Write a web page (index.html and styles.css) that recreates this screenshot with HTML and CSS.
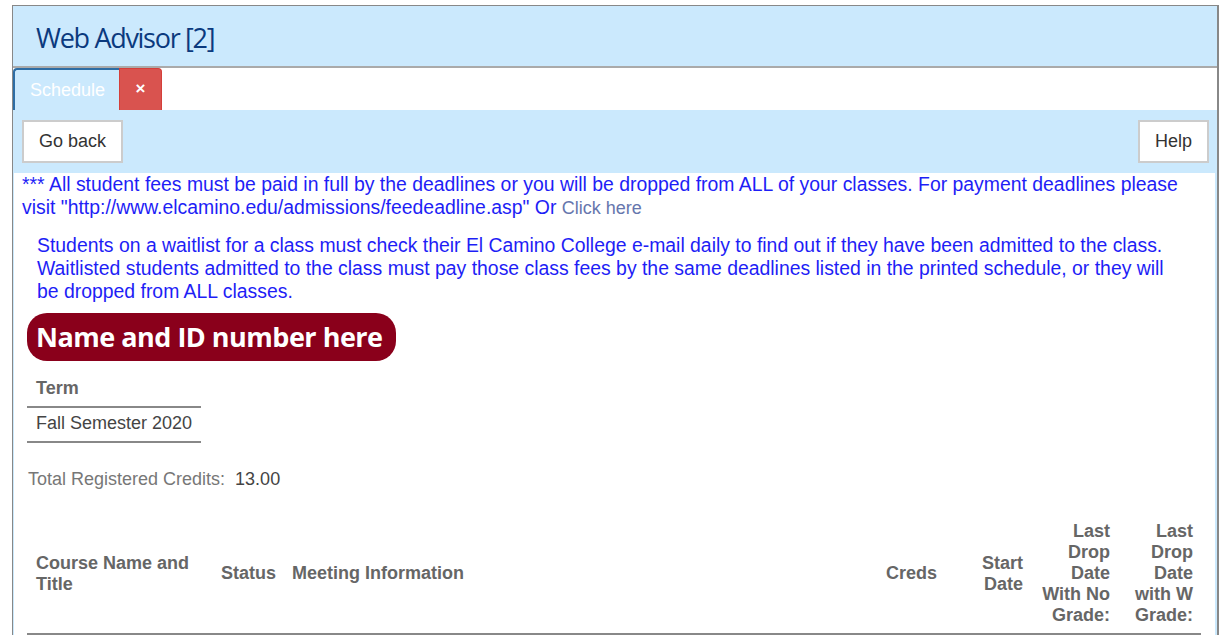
FILE: index.html
```html
<!DOCTYPE html>
<html lang="en">

<head>
    <meta charset="UTF-8">
    <meta name="viewport" content="width=device-width, initial-scale=1.0">
    <title>Web Advisor</title>
    <link rel="stylesheet" href="styles.css">
</head>

<body>
    <div class="frame">
        <div class="header">
            <h1 class="app-title">Web Advisor [2]</h1>
        </div>

        <!-- Tabs -->
        <div class="tabs">
            <span class="tab active">Schedule</span>
            <span class="tab-close">&times;</span>
        </div>

        <div class="toolbar">
            <button class="btn">Go back</button>
            <button class="btn">Help</button>
        </div>

        <div class="content">
            <p class="notice">*** All student fees must be paid in full by the deadlines or you will be dropped from ALL of your classes. For payment deadlines please visit "http://www.elcamino.edu/admissions/feedeadline.asp" Or <a href="#" class="click-link">Click here</a></p>

            <p class="notice waitlist">Students on a waitlist for a class must check their El Camino College e-mail daily to find out if they have been admitted to the class. Waitlisted students admitted to the class must pay those class fees by the same deadlines listed in the printed schedule, or they will be dropped from ALL classes.</p>

            <div class="student-name">Name and ID number here</div>

            <table class="term-table">
                <tr><th>Term</th></tr>
                <tr><td>Fall Semester 2020</td></tr>
            </table>

            <p class="credits"><span class="credits-label">Total Registered Credits:</span>&nbsp; 13.00</p>

            <table class="schedule">
                <colgroup>
                    <col style="width:185px">
                    <col style="width:71px">
                    <col style="width:588px">
                    <col style="width:74px">
                    <col style="width:86px">
                    <col style="width:87px">
                    <col style="width:83px">
                </colgroup>
                <tr>
                    <th>Course Name and Title</th>
                    <th>Status</th>
                    <th>Meeting Information</th>
                    <th class="right">Creds</th>
                    <th class="right">Start Date</th>
                    <th class="right">Last Drop Date With No Grade:</th>
                    <th class="right">Last Drop Date with W Grade:</th>
                </tr>
            </table>
        </div>
    </div>
</body>

</html>
```

FILE: styles.css
```css
body {
    margin: 0;
    font-family: "Liberation Sans", Arial, sans-serif;
}

.frame {
    margin: 5px 0 0 12px;
    width: 1204px;
    border: 1px solid #888;
    border-right-width: 2px;
    border-bottom: none;
    background-color: #cbe9fd;
}

/* Header */
.header {
    height: 60px;
    border-bottom: 2px solid #aaa;
    display: flex;
    align-items: center;
}

.app-title {
    margin: 2px 0 0 23px;
    font-family: "Open Sans", sans-serif;
    font-weight: 400;
    font-size: 27px;
    letter-spacing: -1.3px;
    color: #0b3a7e;
}

/* Tabs */
.tabs {
    display: flex;
    height: 42px;
    background-color: #fff;
}

.tab {
    box-sizing: border-box;
    width: 106px;
    padding-left: 15px;
    background-color: #cbe9fd;
    border-top: 2px solid #2e6da4;
    border-left: 2px solid #2e6da4;
    border-top-left-radius: 4px;
    color: #fff;
    font-size: 18px;
    line-height: 40px;
}

.tab-close {
    box-sizing: border-box;
    width: 43px;
    background-color: #d9534f;
    border: 1px solid #d43f3a;
    border-bottom: none;
    border-top-right-radius: 4px;
    color: #fff;
    font-weight: bold;
    font-size: 17px;
    text-align: center;
    line-height: 40px;
}

/* Toolbar */
.toolbar {
    display: flex;
    justify-content: space-between;
    padding: 10px 8px 10px 9px;
}

.btn {
    background-color: #fff;
    border: 2px solid #ccc;
    height: 43px;
    padding: 0 15px;
    font-family: "Liberation Sans", Arial, sans-serif;
    font-size: 18px;
    color: #333;
}

/* Content */
.content {
    background-color: #fff;
    margin: 0 2px 0 1px;
    padding: 0 14px 0 13px;
    height: 470px;
}

.notice {
    margin: 0 0 0 -5px;
    color: #1e1ef6;
    font-size: 19.4px;
    line-height: 23px;
}

.click-link {
    color: #6676ad;
    font-size: 18px;
    text-decoration: none;
}

.notice.waitlist {
    margin: 14px 25px 0 10px;
}

.student-name {
    width: fit-content;
    margin-top: 10px;
    padding: 0 13px 0 9px;
    height: 48px;
    line-height: 48px;
    background-color: #8a001b;
    border-radius: 20px;
    color: #fff;
    font-family: "Open Sans", sans-serif;
    font-weight: 700;
    font-size: 27px;
    letter-spacing: -0.5px;
}

.term-table {
    margin-top: 12px;
    border-collapse: collapse;
    font-size: 18px;
    line-height: 20px;
    white-space: nowrap;
}

.term-table th {
    text-align: left;
    color: #666;
    padding: 5px 9px 8px 9px;
    border-bottom: 2px solid #888;
}

.term-table td {
    padding: 5px 9px 8px 9px;
    border-bottom: 2px solid #888;
    color: #444;
}

.credits {
    margin: 26px 0 0 1px;
    font-size: 18px;
    line-height: 20px;
    color: #444;
}

.credits-label {
    color: #777;
}

.schedule {
    margin-top: 24px;
    border-collapse: collapse;
    table-layout: fixed;
    width: 1174px;
    font-size: 18px;
}

.schedule th {
    text-align: left;
    color: #666;
    line-height: 21px;
    padding: 8px 8px 7px 9px;
    border-bottom: 2px solid #888;
    vertical-align: middle;
}

.schedule th.right {
    text-align: right;
}
```
